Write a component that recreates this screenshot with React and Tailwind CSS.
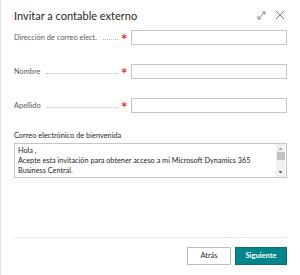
import React from "react";

function Field({ label, className = "" }) {
  return (
    <div className={"flex items-center h-[15px] " + className}>
      <span className="text-[7.4px] text-[#5a5a5a] whitespace-nowrap leading-none">{label}</span>
      <div className="flex-1 ml-[6px] mr-[3px] mt-[3px] border-b border-dotted border-[#bcbcbc] h-0" />
      <span className="text-[#e0302a] text-[15px] leading-none font-bold w-[9px] mr-[1px] mt-[4px]">*</span>
      <div className="w-[156px] h-[15px] border border-[#c6c6c6] bg-white" />
    </div>
  );
}

export default function App() {
  return (
    <div
      className="w-[300px] h-[275px] bg-white border-l border-[#e2e2e2] flex flex-col relative"
      style={{ fontFamily: 'Lato, "Open Sans", sans-serif' }}
    >
      <div className="flex items-center h-[30px] pl-[13px] pr-[15px]">
        <span className="text-[11px] text-[#262626] leading-none">Invitar a contable externo</span>
        <div className="flex-1" />
        <svg width="9" height="9" viewBox="0 0 9 9" className="mr-[9px]" fill="none" stroke="#8a8a8a" strokeWidth="1">
          <path d="M1 8 L8 1" />
          <path d="M5 1 H8 V4" />
          <path d="M1 5 V8 H4" />
        </svg>
        <svg width="10" height="10" viewBox="0 0 10 10" fill="none" stroke="#7a7a7a" strokeWidth="1">
          <path d="M1 1 L9 9 M9 1 L1 9" />
        </svg>
      </div>

      <div className="px-[13px] flex flex-col">
        <Field label="Dirección de correo elect." className="mt-0" />
        <Field label="Nombre" className="mt-[19px]" />
        <Field label="Apellido" className="mt-[19px]" />

        <div className="mt-[19px] text-[7.4px] text-[#262626] leading-none">Correo electrónico de bienvenida</div>
        <div className="mt-[4px] h-[35px] border border-[#c6c6c6] flex">
          <div className="flex-1 pl-[3px] pt-[2px] text-[7.3px] leading-[10px] text-[#262626]">
            <div>Hola ,</div>
            <div>Acepte esta invitación para obtener acceso a mi Microsoft Dynamics 365</div>
            <div>Business Central.</div>
          </div>
          <div className="w-[9px] bg-[#f0f0f0] flex flex-col items-center mr-[1px]">
            <svg width="5" height="5" viewBox="0 0 5 5" className="mt-[2px]">
              <path d="M0.5 4 L2.5 1.5 L4.5 4 Z" fill="#a0a0a0" />
            </svg>
            <div className="w-[8px] h-[8px] bg-[#c2c2c2] mt-[1px]" />
            <div className="flex-1" />
            <svg width="5" height="5" viewBox="0 0 5 5" className="mb-[2px]">
              <path d="M0.5 1 L2.5 3.5 L4.5 1 Z" fill="#606060" />
            </svg>
          </div>
        </div>
      </div>

      <div className="flex-1" />

      <div className="mx-[13px] border-t border-[#e6e6e6]" />
      <div className="flex justify-end gap-[4px] px-[13px] mt-[9px] mb-[10px]">
        <button className="w-[44px] h-[18px] border border-[#bdbdbd] bg-white text-[7.5px] text-[#262626] leading-none">Atrás</button>
        <button className="w-[52px] h-[18px] border border-[#0e6b6f] bg-[#00858a] text-[7.5px] text-white font-bold leading-none">Siguiente</button>
      </div>
    </div>
  );
}
